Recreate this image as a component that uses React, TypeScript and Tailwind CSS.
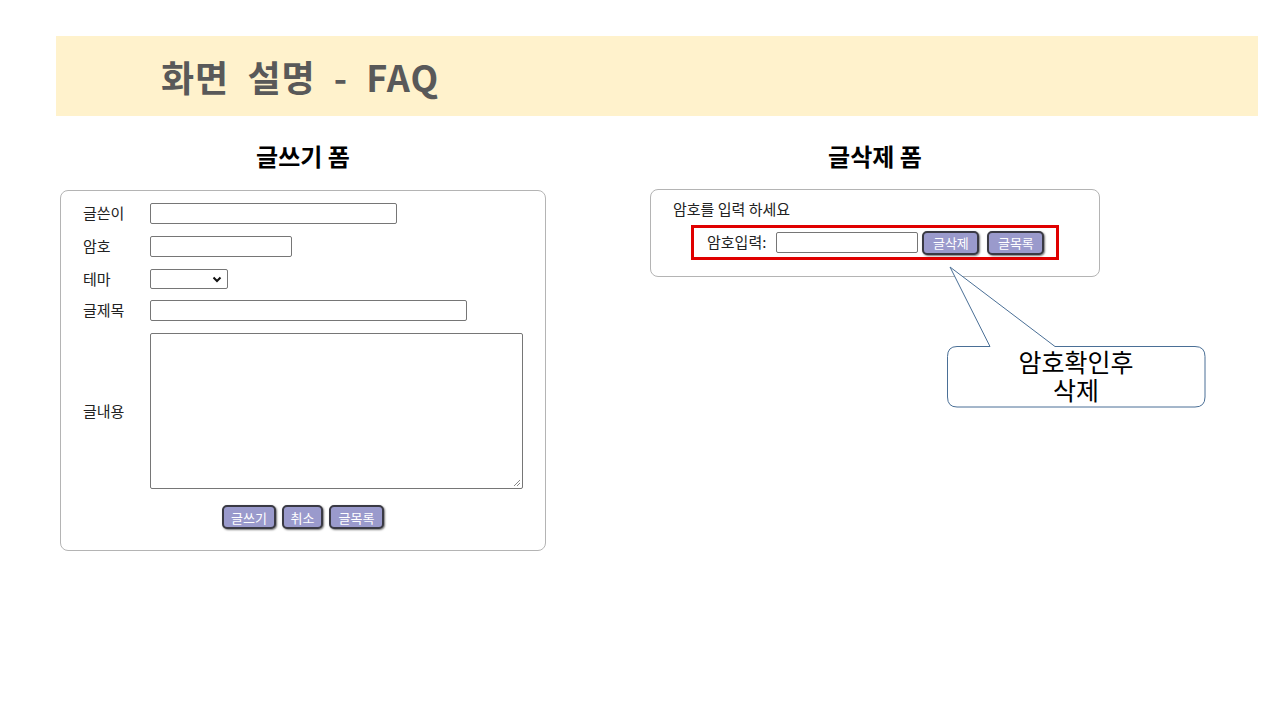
import React from "react";

const font = { fontFamily: '"Noto Sans CJK KR", "Noto Sans", sans-serif' };

function Btn({ children, w }: { children: React.ReactNode; w: string }) {
  return (
    <button
      className={`${w} h-[24px] bg-[#9a9acc] text-white text-[13px] leading-none border-2 border-[#3a3a44] rounded-[5px] shadow-[1px_1px_2px_rgba(0,0,0,0.55)] flex items-center justify-center`}
    >
      {children}
    </button>
  );
}

function Row({ label, children, h, mt }: { label: string; children: React.ReactNode; h: string; mt: string }) {
  return (
    <div className={`flex items-center ${h} ${mt}`}>
      <div className="w-[67px] text-[15px] text-[#222]">{label}</div>
      {children}
    </div>
  );
}

export default function App() {
  return (
    <div className="relative w-[1280px] h-[720px] bg-white text-black pt-[36px]" style={font}>
      <div className="ml-[56px] w-[1202px] h-[80px] bg-[#fff2cc] flex items-center pl-[105px]">
        <h1 className="text-[36px] font-bold text-[#595959] tracking-[1px] [word-spacing:9px]">화면 설명 - FAQ</h1>
      </div>

      <div className="flex pl-[60px] gap-[104px] mt-[24px]">
        <div className="w-[486px] flex flex-col">
          <h2 className="h-[32px] leading-[32px] text-[24px] font-bold text-center mb-[18px]">글쓰기 폼</h2>
          <div className="h-[361px] border border-[#b4b4b4] rounded-[8px] pl-[22px] pt-[12px]">
            <Row label="글쓴이" h="h-[21px]" mt="mt-0">
              <div className="w-[247px] h-[21px] border border-[#767676] rounded-[2px]" />
            </Row>
            <Row label="암호" h="h-[21px]" mt="mt-[12px]">
              <div className="w-[142px] h-[21px] border border-[#767676] rounded-[2px]" />
            </Row>
            <Row label="테마" h="h-[20px]" mt="mt-[12px]">
              <div className="w-[78px] h-[20px] border border-[#767676] rounded-[2px] flex items-center justify-end pr-[5px]">
                <svg width="10" height="7" viewBox="0 0 10 7">
                  <path d="M1.5 1.5 L5 5 L8.5 1.5" stroke="#111" strokeWidth="2" fill="none" />
                </svg>
              </div>
            </Row>
            <Row label="글제목" h="h-[21px]" mt="mt-[11px]">
              <div className="w-[317px] h-[21px] border border-[#767676] rounded-[2px]" />
            </Row>
            <Row label="글내용" h="h-[156px]" mt="mt-[12px]">
              <div className="relative w-[373px] h-[156px] border border-[#767676] rounded-[2px]">
                <svg className="absolute right-[1px] bottom-[1px]" width="9" height="9" viewBox="0 0 9 9">
                  <path d="M8 2 L2 8 M8 5 L5 8" stroke="#888" strokeWidth="1" />
                </svg>
              </div>
            </Row>
            <div className="flex gap-[6px] mt-[16px] pl-[139px]">
              <Btn w="w-[54px]">글쓰기</Btn>
              <Btn w="w-[41px]">취소</Btn>
              <Btn w="w-[55px]">글목록</Btn>
            </div>
          </div>
        </div>

        <div className="w-[450px] flex flex-col">
          <h2 className="h-[32px] leading-[32px] text-[24px] font-bold text-center mb-[17px]">글삭제 폼</h2>
          <div className="h-[88px] border border-[#b4b4b4] rounded-[8px] pl-[22px] pt-[9px]">
            <div className="text-[15px] leading-[20px] text-[#222]">암호를 입력 하세요</div>
            <div className="ml-[18px] mt-[6px] w-[368px] h-[35px] border-[3px] border-[#e00000] flex items-center pl-[13px]">
              <span className="text-[15px] text-[#222] mr-[10px]">암호입력:</span>
              <div className="w-[142px] h-[21px] border border-[#767676] rounded-[2px] mr-[4px]" />
              <Btn w="w-[57px]">글삭제</Btn>
              <div className="w-[8px]" />
              <Btn w="w-[57px]">글목록</Btn>
            </div>
          </div>
        </div>
      </div>

      <div className="absolute left-[940px] top-[260px] w-[272px] h-[152px]">
        <svg className="absolute left-0 top-0" width="272" height="152" viewBox="940 260 272 152">
          <path
            d="M 957 346.5 H 990 L 950 267 L 1055 346.5 H 1195 Q 1205 346.5 1205 356.5 V 397 Q 1205 407 1195 407 H 957 Q 947.5 407 947.5 397 V 356.5 Q 947.5 346.5 957 346.5 Z"
            fill="white"
            stroke="#4a6f96"
            strokeWidth="1"
          />
        </svg>
        <div className="absolute left-[7px] top-[84px] w-[258px] h-[61px] flex items-center justify-center">
          <p className="text-[25px] leading-[28px] text-black text-center">
            암호확인후
            <br />
            삭제
          </p>
        </div>
      </div>
    </div>
  );
}
